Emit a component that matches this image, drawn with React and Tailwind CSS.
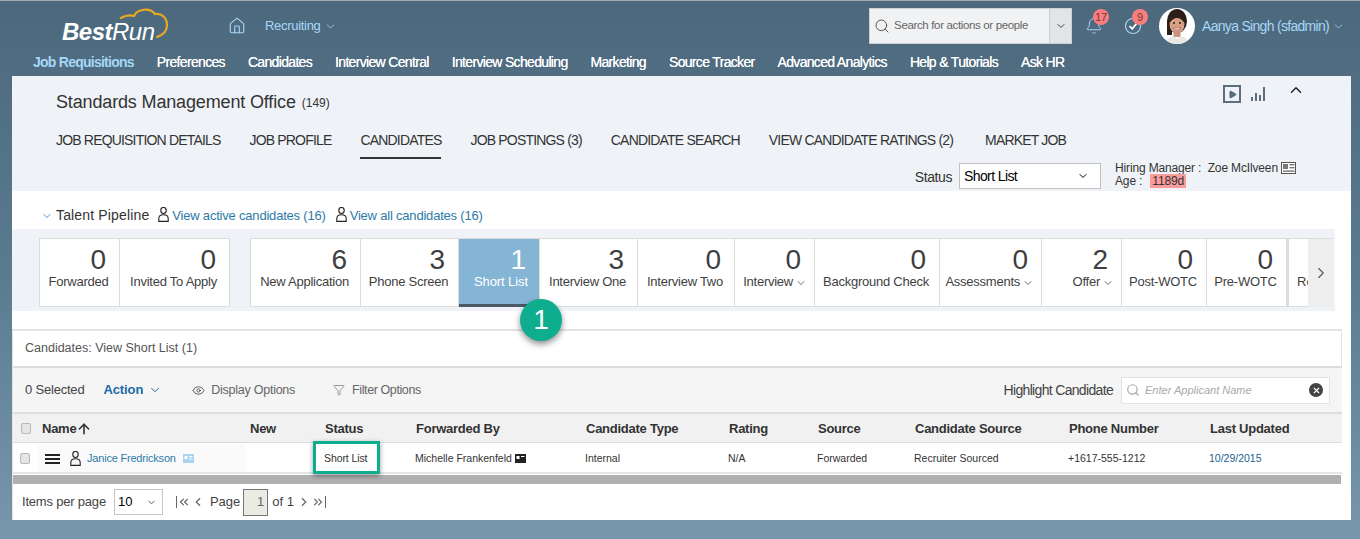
import React from 'react';
import { ChevronDown, ChevronRight, ChevronUp, ChevronLeft, ChevronsLeft, ChevronsRight, Search, Bell, Home, Eye, Filter, ArrowUp, Play, X } from 'lucide-react';

const NAV = ['Preferences', 'Candidates', 'Interview Central', 'Interview Scheduling', 'Marketing', 'Source Tracker', 'Advanced Analytics', 'Help & Tutorials', 'Ask HR'];

const TABS = [
    { label: 'JOB REQUISITION DETAILS' },
    { label: 'JOB PROFILE' },
    { label: 'CANDIDATES', active: true },
    { label: 'JOB POSTINGS (3)' },
    { label: 'CANDIDATE SEARCH' },
    { label: 'VIEW CANDIDATE RATINGS (2)' },
    { label: 'MARKET JOB', last: true },
];

const STAGES = [
    { n: 6, label: 'New Application', w: 'w-[110px]' },
    { n: 3, label: 'Phone Screen', w: 'w-[98px]' },
    { n: 1, label: 'Short List', w: 'w-[81px]', active: true },
    { n: 3, label: 'Interview One', w: 'w-[98px]' },
    { n: 0, label: 'Interview Two', w: 'w-[97px]' },
    { n: 0, label: 'Interview', w: 'w-[80px]', more: true },
    { n: 0, label: 'Background Check', w: 'w-[125px]' },
    { n: 0, label: 'Assessments', w: 'w-[102px]', more: true },
    { n: 2, label: 'Offer', w: 'w-[80px]', more: true },
    { n: 0, label: 'Post-WOTC', w: 'w-[85px]' },
    { n: 0, label: 'Pre-WOTC', w: 'w-[80px]' },
];

const COLUMNS = [
    { label: 'New', w: 'w-[75px]' },
    { label: 'Status', w: 'w-[91px]' },
    { label: 'Forwarded By', w: 'w-[170px]' },
    { label: 'Candidate Type', w: 'w-[143px]' },
    { label: 'Rating', w: 'w-[89px]' },
    { label: 'Source', w: 'w-[97px]' },
    { label: 'Candidate Source', w: 'w-[154px]' },
    { label: 'Phone Number', w: 'w-[141px]' },
    { label: 'Last Updated', w: 'w-[135px]' },
];

function Logo() {
    return (
        <div className="relative w-[120px] h-[36px]">
            <svg className="absolute left-0 top-0 overflow-visible" width="120" height="36" viewBox="0 0 120 36" fill="none">
                <path d="M59 10 C64 7 68 7 72 8 C75 1 88 -1 93 6 C100 5 105 10 105 17 C105 23 101 27 95 29" stroke="#eba91f" strokeWidth="2.2" strokeLinecap="round" />
            </svg>
            <span className="absolute left-0 top-[10px] text-[24px] leading-[28px] text-white italic tracking-[-0.5px]">
                <b>Best</b>Run
            </span>
        </div>
    );
}

function Avatar() {
    return (
        <svg width="36" height="36" viewBox="0 0 36 36" className="rounded-full bg-white">
            <ellipse cx="18" cy="13" rx="10" ry="12" fill="#2b1d18" />
            <rect x="8" y="13" width="5" height="14" fill="#2b1d18" />
            <ellipse cx="18" cy="16" rx="7.5" ry="9.5" fill="#d6a283" />
            <path d="M10.5 15 C11 9 15 6 18 6 C22 6 25.5 9 25.5 15 C23 11 20 10 18 10 C15 10 12.5 12 10.5 15 Z" fill="#2b1d18" />
            <rect x="14.5" y="23" width="7" height="6" fill="#c99378" />
            <path d="M6 36 C7 31 10 29 14.5 28 L18 31 L21.5 28 C26 29 29 31 30 36 Z" fill="#e9e6e4" />
            <path d="M14 20 C16 22.5 20 22.5 22 20 Z" fill="#fff" stroke="#94463e" strokeWidth="0.6" />
            <circle cx="15" cy="15" r="1" fill="#2b1d18" />
            <circle cx="21" cy="15" r="1" fill="#2b1d18" />
        </svg>
    );
}

function Badge({ children }) {
    return (
        <span className="absolute -top-[8px] left-[8px] w-[16px] h-[16px] rounded-full bg-[#fa7e7e] text-[#6b3a3a] text-[11px] leading-[16px] text-center">
            {children}
        </span>
    );
}

function PersonIcon({ className }) {
    return (
        <svg width="11" height="15" viewBox="0 0 11 15" fill="none" stroke="#222222" strokeWidth="1.1" className={className}>
            <ellipse cx="5.5" cy="3.5" rx="2.7" ry="3" />
            <path d="M0.8 14.4 L0.8 11.5 C0.8 9 3 7.8 5.5 7.8 C8 7.8 10.2 9 10.2 11.5 L10.2 14.4 Z" />
        </svg>
    );
}

function EdgeArrows({ dir }) {
    const Icon = dir === 'left' ? ChevronsLeft : ChevronsRight;
    return (
        <span className="flex items-center text-[#666666]">
            {dir === 'left' && <span className="w-[1px] h-[12px] bg-[#666666]" />}
            <Icon className="w-[14px] h-[14px]" strokeWidth={2} />
            {dir === 'right' && <span className="w-[1px] h-[12px] bg-[#666666]" />}
        </span>
    );
}

function Header() {
    return (
        <div>
            <div className="h-[1px] bg-[#a8a8a8]" />
            <div className="flex items-center h-[50px] pl-[62px] pr-[15px]">
                <Logo />
                <Home className="w-[18px] h-[18px] ml-[46px] text-[#a6d7f7]" strokeWidth={1.5} />
                <span className="ml-[19px] text-[13px] text-[#a6d7f7] tracking-[-0.3px]">Recruiting</span>
                <ChevronDown className="w-[13px] h-[13px] ml-[3px] text-[#a6d7f7]" strokeWidth={1.5} />
                <div className="ml-auto flex h-[36px] w-[203px] border border-[#c9cfd3] bg-[#f1f2f3]">
                    <div className="flex-1 flex items-center pl-[4px] gap-[4px]">
                        <Search className="w-[16px] h-[16px] text-[#555555]" strokeWidth={1.5} />
                        <span className="text-[11.5px] text-[#666666] tracking-[-0.35px]">Search for actions or people</span>
                    </div>
                    <div className="w-[22px] flex items-center justify-center bg-[#e1e5e8] border-l border-[#c9cfd3]">
                        <ChevronDown className="w-[12px] h-[12px] text-[#444444]" />
                    </div>
                </div>
                <div className="relative ml-[13px]">
                    <Bell className="w-[18px] h-[18px] text-[#a6d7f7]" strokeWidth={1.3} />
                    <Badge>17</Badge>
                </div>
                <div className="relative ml-[21px]">
                    <svg width="18" height="18" viewBox="0 0 18 18" fill="none" className="block">
                        <circle cx="9" cy="9" r="7.5" stroke="#a6d7f7" strokeWidth="1.2" />
                        <path d="M5.5 9 L8.2 11.8 L13 6" stroke="#ffffff" strokeWidth="1.8" />
                    </svg>
                    <Badge>9</Badge>
                </div>
                <div className="ml-[17px]"><Avatar /></div>
                <span className="ml-[7px] text-[14px] text-[#a6d7f7] tracking-[-0.7px]">Aanya Singh (sfadmin)</span>
                <ChevronDown className="w-[13px] h-[13px] ml-[3px] text-[#a6d7f7]" strokeWidth={1.5} />
            </div>
            <nav className="flex items-center gap-[23px] h-[25px] pb-[3px] pl-[33px] text-[14px] text-white">
                <span className="text-[#a6d7f7] font-bold tracking-[-0.75px]">Job Requisitions</span>
                {NAV.map((item) => (
                    <span key={item} className="tracking-[-0.67px] [text-shadow:0_0_0.5px_#fff]">{item}</span>
                ))}
            </nav>
        </div>
    );
}

function Summary() {
    return (
        <section className="bg-[#eff3f7] h-[115px] pl-[44px] pr-[46px] text-[#333333]">
            <div className="flex items-start pt-[15px] h-[46px]">
                <h1 className="text-[18px] leading-[22px] tracking-[-0.15px]">Standards Management Office</h1>
                <span className="ml-[6px] mt-[3px] text-[12px] leading-[19px]">(149)</span>
                <div className="ml-auto flex items-start gap-[9px] -mt-[6px] text-[#4a5f6d]">
                    <span className="w-[18px] h-[18px] border-2 border-[#5b6f7c] flex items-center justify-center">
                        <Play className="w-[9px] h-[9px] fill-[#5b6f7c]" />
                    </span>
                    <svg width="16" height="17" viewBox="0 0 16 17" fill="#5b6f7c">
                        <rect x="1" y="12" width="2" height="4" />
                        <rect x="5" y="8" width="2" height="8" />
                        <rect x="9" y="10" width="2" height="6" />
                        <rect x="13" y="2" width="2" height="14" />
                    </svg>
                    <ChevronUp className="ml-[12px] -mt-[4px] w-[18px] h-[18px] text-[#222222]" strokeWidth={2} />
                </div>
            </div>
            <div className="flex gap-[29px] text-[14px] h-[37px] tracking-[-0.82px]">
                {TABS.map((tab) => (
                    <div key={tab.label} className={`h-[37px] pt-[8px] leading-[20px] ${tab.active ? 'border-b-2 border-[#333333]' : ''} ${tab.last ? 'ml-[3px]' : ''}`}>
                        {tab.label}
                    </div>
                ))}
            </div>
            <div className="flex justify-end items-start pt-[3px]">
                <span className="text-[14px] mt-[5px] tracking-[-0.4px]">Status</span>
                <div className="ml-[7px] mt-[1px] w-[142px] h-[26px] border border-[#c1c1c1] bg-white flex items-center justify-between pl-[4px] pr-[11px] text-[14px] text-black tracking-[-0.6px]">
                    Short List
                    <ChevronDown className="w-[12px] h-[12px]" />
                </div>
                <div className="ml-[14px] w-[190px] text-[12px] leading-[14px] -mt-[1px] tracking-[-0.15px]">
                    <div className="flex items-center gap-[2px] h-[14px]">
                        Hiring Manager :&nbsp;&nbsp;Zoe McIlveen
                        <svg width="15" height="12" viewBox="0 0 15 12" className="ml-[1px]">
                            <rect x="0.5" y="0.5" width="14" height="11" fill="#fff" stroke="#555" />
                            <rect x="2" y="2" width="5" height="5" fill="#777" />
                            <rect x="8.5" y="2" width="5" height="1.4" fill="#777" />
                            <rect x="8.5" y="5" width="5" height="1.4" fill="#777" />
                            <rect x="2" y="8.4" width="11.5" height="1.4" fill="#777" />
                        </svg>
                    </div>
                    <div className="h-[14px] flex mt-[-1px]">
                        Age :
                        <span className="ml-[8px] px-[2px] bg-[#fb9c9c]">1189d</span>
                    </div>
                </div>
            </div>
        </section>
    );
}

function StageCard({ stage, className }) {
    return (
        <div className={`relative shrink-0 h-[68px] pr-[10px] pl-[8px] flex flex-col items-end border-r border-[#dcdcdc] ${stage.active ? 'bg-[#85b5d4] text-white border-b-[3px] border-b-[#4c5a66]' : 'bg-white text-[#3f3f3f]'} ${stage.w} ${className || ''}`}>
            <div className="text-[28px] leading-[32px] mt-[5px] mr-[3px]">{stage.n}</div>
            <div className={`self-stretch flex items-center text-[13px] leading-[18px] -mt-[3px] whitespace-nowrap ${stage.more ? 'justify-end -mr-[3px]' : 'justify-center'} ${stage.active ? 'tracking-[-0.1px] ml-[6px]' : 'tracking-[-0.25px]'}`}>
                {stage.label}
                {stage.more && <ChevronDown className="w-[12px] h-[12px] ml-[2px] mt-[2px] shrink-0" strokeWidth={1.5} />}
            </div>
            {stage.active && (
                <div className="absolute left-[61px] top-[60px] z-10 w-[42px] h-[42px] rounded-full bg-[#0dad8e] text-white text-[28px] leading-[42px] text-center shadow-[0_3px_6px_rgba(0,0,0,0.45)]">
                    1
                </div>
            )}
        </div>
    );
}

function Pipeline() {
    return (
        <section>
            <div className="h-[38px] flex items-center pl-[29px] pt-[11px] text-[14px]">
                <ChevronDown className="w-[12px] h-[12px] text-[#0a6ed1]" strokeWidth={1.5} />
                <span className="ml-[3px] text-[#333333] tracking-[0.15px]">Talent Pipeline</span>
                <PersonIcon className="ml-[9px] -mt-[2px]" />
                <span className="ml-[3px] text-[13px] text-[#2d7aa8] tracking-[-0.2px]">View active candidates (16)</span>
                <PersonIcon className="ml-[10px] -mt-[2px]" />
                <span className="ml-[3px] text-[13px] text-[#2d7aa8] tracking-[-0.2px]">View all candidates (16)</span>
            </div>
            <div className="w-[1323px] h-[82px] bg-[#eff3f7] pt-[9px] pl-[27px] flex items-start">
                <div className="flex border border-[#dcdcdc] border-r-0 border-b-0">
                    <StageCard stage={{ n: 0, label: 'Forwarded', w: 'w-[80px]' }} className="border-b border-b-[#dcdcdc]" />
                    <StageCard stage={{ n: 0, label: 'Invited To Apply', w: 'w-[110px]' }} className="border-b border-b-[#dcdcdc]" />
                </div>
                <div className="ml-[20px] flex border-t border-l border-[#dcdcdc]">
                    {STAGES.map((s) => (
                        <StageCard key={s.label} stage={s} className={s.active ? '' : 'border-b border-b-[#dcdcdc]'} />
                    ))}
                    <div className="w-[21px] h-[68px] overflow-hidden bg-white border-l-2 border-[#dcdcdc] border-b pl-[8px] pt-[34px] text-[13px] leading-[18px] text-[#3f3f3f]">Re</div>
                    <div className="w-[25px] h-[68px] bg-[#eeeeee] flex items-center justify-center">
                        <ChevronRight className="w-[18px] h-[18px] text-[#555555]" strokeWidth={1.5} />
                    </div>
                </div>
            </div>
        </section>
    );
}

function Toolbar() {
    return (
        <div className="h-[48px] bg-[#f5f5f5] border-y-2 border-[#dddddd] flex items-center pl-[12px] pr-[12px] text-[13px]">
            <span className="text-[#444444] tracking-[-0.2px]">0 Selected</span>
            <span className="ml-[19px] text-[#1c6aa5] font-bold tracking-[-0.1px]">Action</span>
            <ChevronDown className="w-[14px] h-[14px] ml-[5px] text-[#1c6aa5]" strokeWidth={1.7} />
            <Eye className="w-[13px] h-[13px] ml-[30px] text-[#555555]" strokeWidth={1.7} />
            <span className="ml-[6px] text-[12.5px] text-[#666666] tracking-[-0.25px]">Display Options</span>
            <Filter className="w-[12px] h-[12px] ml-[38px] text-[#666666]" strokeWidth={1.3} />
            <span className="ml-[7px] text-[12.5px] text-[#666666] tracking-[-0.4px]">Filter Options</span>
            <span className="ml-auto text-[#444444] text-[14px] tracking-[-0.67px]">Highlight Candidate</span>
            <div className="ml-[8px] w-[209px] h-[27px] bg-white border border-[#e3e3e3] flex items-center pl-[4px] pr-[6px]">
                <Search className="w-[14px] h-[14px] text-[#aaaaaa]" strokeWidth={2} />
                <span className="ml-[5px] text-[11px] italic text-[#a9a9a9]">Enter Applicant Name</span>
                <span className="ml-auto w-[14px] h-[14px] rounded-full bg-[#444444] flex items-center justify-center">
                    <X className="w-[9px] h-[9px] text-white" strokeWidth={3} />
                </span>
            </div>
        </div>
    );
}

function Checkbox() {
    return <span className="block w-[10px] h-[11px] rounded-[2px] bg-[#e5e5e5] border border-[#b8b8b8]" />;
}

function CandidatesTable() {
    return (
        <section className="mt-[18px] w-[1330px] border-t-2 border-l border-[#e3e3e3] bg-white">
            <div className="h-[35px] flex items-center pl-[12px] text-[12.5px] text-[#555555] border-r border-[#e3e3e3]">Candidates: View Short List (1)</div>
            <Toolbar />
            <div className="flex h-[29px] pt-[1px] bg-[#f1f1f1] border-b border-[#dcdcdc] items-center text-[13px] font-bold text-[#333333] tracking-[-0.25px]">
                <div className="w-[25px] pl-[8px]"><Checkbox /></div>
                <div className="w-[208px] pl-[4px] flex items-center">
                    Name
                    <ArrowUp className="w-[16px] h-[16px]" strokeWidth={2.4} />
                </div>
                {COLUMNS.map((c) => (
                    <div key={c.label} className={`pl-[4px] ${c.w}`}>{c.label}</div>
                ))}
            </div>
            <div className="flex h-[31px] pt-[2px] items-center border-b-2 border-[#e6e6e6] text-[10.5px] text-[#333333]">
                <div className="w-[25px] pl-[7px]"><Checkbox /></div>
                <div className="w-[208px] h-full pl-[7px] bg-[#fafafa] flex items-center">
                    <span className="w-[15px] flex flex-col gap-[2px]">
                        <span className="h-[2px] bg-[#222222]" />
                        <span className="h-[2px] bg-[#222222]" />
                        <span className="h-[2px] bg-[#222222]" />
                    </span>
                    <PersonIcon className="ml-[10px]" />
                    <span className="ml-[6px] text-[#2d7aa8] text-[11px] tracking-[-0.2px]">Janice Fredrickson</span>
                    <svg width="11" height="9" viewBox="0 0 11 9" className="ml-[7px]">
                        <rect width="11" height="9" fill="#a9d3ef" />
                        <rect x="1.5" y="2" width="3" height="3" fill="#fff" />
                        <rect x="6" y="2" width="3.5" height="1" fill="#fff" />
                        <rect x="6" y="4.5" width="3.5" height="1" fill="#fff" />
                    </svg>
                </div>
                <div className="w-[75px]" />
                <div className="w-[91px] pl-[3px] relative">
                    <span className="tracking-[-0.1px]">Short List</span>
                    <span className="absolute -left-[8px] -top-[10px] w-[67px] h-[33px] border-[3px] border-[#0dad8e] shadow-[0_2px_5px_rgba(0,0,0,0.4)]" />
                </div>
                <div className="w-[170px] pl-[3px] flex items-center">
                    Michelle Frankenfeld
                    <svg width="11" height="9" viewBox="0 0 11 9" className="ml-[3px]">
                        <rect width="11" height="9" fill="#222222" />
                        <rect x="1.5" y="2" width="3" height="3" fill="#fff" />
                        <rect x="6" y="2" width="3.5" height="1" fill="#fff" />
                    </svg>
                </div>
                <div className="w-[143px] pl-[3px]">Internal</div>
                <div className="w-[89px] pl-[3px]">N/A</div>
                <div className="w-[97px] pl-[3px]">Forwarded</div>
                <div className="w-[154px] pl-[3px]">Recruiter Sourced</div>
                <div className="w-[141px] pl-[3px]">+1617-555-1212</div>
                <div className="w-[135px] pl-[3px] text-[#1c5f8f]">10/29/2015</div>
            </div>
            <div className="mt-[1px] mr-[1px] h-[9px] bg-[#b0b0b0]" />
            <div className="flex items-center h-[36px] pl-[9px] text-[13px] text-[#444444]">
                <span className="tracking-[-0.2px]">Items per page</span>
                <div className="ml-[8px] w-[49px] h-[26px] border border-[#c4c4c4] flex items-center justify-between pl-[3px] pr-[5px] text-[13px] text-black">
                    10
                    <ChevronDown className="w-[11px] h-[11px] text-[#555555]" />
                </div>
                <span className="ml-[13px]"><EdgeArrows dir="left" /></span>
                <ChevronLeft className="w-[14px] h-[14px] text-[#666666]" strokeWidth={2} />
                <span className="ml-[5px]">Page</span>
                <span className="ml-[3px] w-[25px] h-[27px] bg-[#ebebe4] border border-[#767676] flex items-center justify-end pr-[3px] text-[#666666]">1</span>
                <span className="ml-[4px]">of 1</span>
                <ChevronRight className="w-[14px] h-[14px] ml-[3px] text-[#666666]" strokeWidth={2} />
                <EdgeArrows dir="right" />
            </div>
        </section>
    );
}

export default function App() {
    return (
        <div className="h-[539px] overflow-hidden bg-gradient-to-b from-[#4c687d] via-[#5a7a90] to-[#7897ad] font-['Liberation_Sans',Arial,sans-serif]">
            <Header />
            <main className="ml-[12px] w-[1339px] h-[444px] bg-white">
                <Summary />
                <Pipeline />
                <CandidatesTable />
            </main>
        </div>
    );
}
